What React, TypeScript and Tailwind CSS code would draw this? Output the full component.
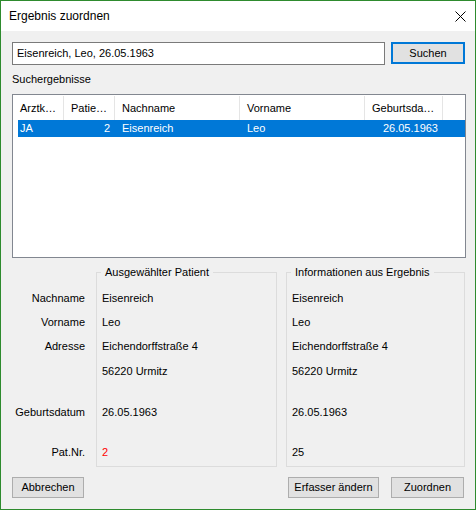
import React from 'react';

const COLS = [
  { head: 'Arztk…', w: 'w-[51px]', rowW: 'w-[46px]', value: 'JA', right: false },
  { head: 'Patie…', w: 'w-[51px]', rowW: 'w-[51px]', value: '2', right: true },
  { head: 'Nachname', w: 'w-[125px]', rowW: 'w-[125px]', value: 'Eisenreich', right: false },
  { head: 'Vorname', w: 'w-[125px]', rowW: 'w-[125px]', value: 'Leo', right: false },
  { head: 'Geburtsda…', w: 'w-[78px]', rowW: 'w-[78px]', value: '26.05.1963', right: true },
];

type Row = { label: string; left: string; right: string; h: string; mt?: string; red?: boolean };

const ROWS: Row[] = [
  { label: 'Nachname', left: 'Eisenreich', right: 'Eisenreich', h: 'h-[24px]' },
  { label: 'Vorname', left: 'Leo', right: 'Leo', h: 'h-[24px]' },
  { label: 'Adresse', left: 'Eichendorffstraße 4', right: 'Eichendorffstraße 4', h: 'h-[25px]' },
  { label: '', left: '56220 Urmitz', right: '56220 Urmitz', h: 'h-[24px]' },
  { label: 'Geburtsdatum', left: '26.05.1963', right: '26.05.1963', h: 'h-[24px]', mt: 'mt-[17px]' },
  { label: 'Pat.Nr.', left: '2', right: '25', h: 'h-[24px]', mt: 'mt-[16px]', red: true },
];

function Button({ children, className = '' }: { children: React.ReactNode; className?: string }) {
  return (
    <button className={`flex items-center justify-center bg-[#e1e1e1] border border-[#adadad] text-black ${className}`}>
      {children}
    </button>
  );
}

function GroupBox({ title, width, side }: { title: string; width: string; side: 'left' | 'right' }) {
  return (
    <fieldset className={`${width} h-[203px] border border-[#dcdcdc] px-0 pb-0`}>
      <legend className="ml-[4px] px-[4px] leading-[16px]">{title}</legend>
      <div className="pt-[6px] pl-[5px] flex flex-col">
        {ROWS.map((r, i) => (
          <div
            key={i}
            className={`${r.h} ${r.mt ?? ''} flex items-center ${side === 'left' && r.red ? 'text-[#ff0000]' : ''}`}
          >
            {side === 'left' ? r.left : r.right}
          </div>
        ))}
      </div>
    </fieldset>
  );
}

export default function App() {
  return (
    <div className="w-[476px] h-[510px] border border-[#2e8b2e] bg-[#f0f0f0] flex flex-col font-['Liberation_Sans',Arial,sans-serif] text-[11px] text-black leading-none">
      {/* title bar */}
      <div className="h-[30px] bg-white flex items-center justify-between pl-[8px] pr-[9px]">
        <span className="text-[12px]">Ergebnis zuordnen</span>
        <svg width="11" height="11" viewBox="0 0 11 11" className="mt-[1px]">
          <path d="M0.5 0.5 L10.5 10.5 M10.5 0.5 L0.5 10.5" stroke="#000" strokeWidth="1" />
        </svg>
      </div>

      <div className="flex flex-col pl-[11px] pr-[10px] pt-[11px]">
        {/* search */}
        <div className="flex items-start gap-[6px]">
          <div className="w-[373px] h-[23px] bg-white border border-[#7a7a7a] flex items-center pl-[4px]">
            Eisenreich, Leo, 26.05.1963
          </div>
          <Button className="w-[74px] h-[22px] !border-2 !border-[#0078d7]">Suchen</Button>
        </div>

        <div className="mt-[6px] h-[16px] flex items-center">Suchergebnisse</div>

        {/* results list */}
        <div className="mt-[7px] w-[454px] h-[164px] bg-white border border-[#828790] pt-[1px]">
          <div className="flex h-[24px]">
            {COLS.map((c) => (
              <div key={c.head} className={`${c.w} h-full flex items-center pl-[7px] border-r border-[#e5e5e5]`}>
                {c.head}
              </div>
            ))}
          </div>
          <div className="ml-[5px] flex h-[17px] bg-[#0078d7] text-white">
            {COLS.map((c, i) => (
              <div
                key={c.head}
                className={`${c.rowW} h-full flex items-center ${c.right ? 'justify-end pr-[5px]' : i === 0 ? 'pl-[2px]' : 'pl-[7px]'}`}
              >
                {c.value}
              </div>
            ))}
          </div>
        </div>

        {/* details */}
        <div className="mt-[6px] flex items-start">
          <div className="w-[84px] flex flex-col items-end pr-[11px] pt-[22px]">
            {ROWS.map((r, i) => (
              <div key={i} className={`${r.h} ${r.mt ?? ''} flex items-center`}>
                {r.label}
              </div>
            ))}
          </div>
          <GroupBox title="Ausgewählter Patient" width="w-[181px]" side="left" />
          <div className="w-[9px]" />
          <GroupBox title="Informationen aus Ergebnis" width="w-[179px]" side="right" />
        </div>

        {/* buttons */}
        <div className="mt-[10px] flex items-start">
          <Button className="w-[72px] h-[21px]">Abbrechen</Button>
          <div className="flex-1" />
          <Button className="w-[91px] h-[21px]">Erfasser ändern</Button>
          <Button className="w-[73px] h-[21px] ml-[12px] mr-[1px]">Zuordnen</Button>
        </div>
      </div>
    </div>
  );
}
